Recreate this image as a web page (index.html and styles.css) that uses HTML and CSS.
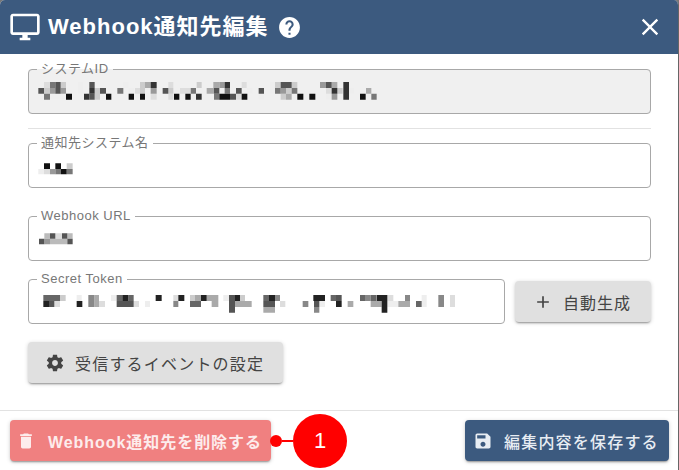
FILE: index.html
```html
<!DOCTYPE html>
<html lang="ja">
<head>
<meta charset="utf-8">
<title>Webhook通知先編集</title>
<link rel="stylesheet" href="styles.css">
</head>
<body>
<div class="dialog">
  <header class="header">
    <svg class="monitor" viewBox="0 0 24 24"><path d="M21 2H3c-1.100 0-2 .9-2 2v12c0 1.100.9 2 2 2h7v2H8v2h8v-2h-2v-2h7c1.100 0 2-.9 2-2V4c0-1.100-.9-2-2-2zm0 14H3V4h18v12z"/></svg>
    <h1 class="title">Webhook通知先編集</h1>
    <svg class="help" viewBox="0 0 24 24"><path d="M12 2C6.480 2 2 6.480 2 12s4.480 10 10 10 10-4.480 10-10S17.520 2 12 2zm1 17h-2v-2h2v2zm2.070-7.750-.9.920C13.450 12.900 13 13.500 13 15h-2v-.5c0-1.100.45-2.100 1.170-2.830l1.240-1.260c.37-.36.590-.86.590-1.410 0-1.100-.9-2-2-2s-2 .9-2 2H8c0-2.210 1.790-4 4-4s4 1.790 4 4c0 .88-.36 1.680-.93 2.250z"/></svg>
    <svg class="close" viewBox="0 0 24 24"><path d="M19 6.410 17.590 5 12 10.590 6.410 5 5 6.410 10.590 12 5 17.590 6.410 19 12 13.410 17.590 19 19 17.590 13.410 12z"/></svg>
  </header>
  <main class="content">
    <fieldset class="field field-id">
      <legend class="legend">システムID</legend>
      <svg class="mosaic" width="360" height="24" viewBox="0 0 1080 72">
        <path fill="#eee" d="M145 12h15v35h-15zM280 12h16v18h-16zM296 30h16v17h-16zM60 47h48v18H60zM720 12h15v18h-15zM720 30h15v17h-15zM652 30h16v17h-16zM686 47h16v18h-16zM888 47h17v18h-17zM957 30h15v17h-15z"/>
        <path fill="#ddd" d="M42 12h18v18H42zM415 12h15v18h-15zM315 30h15v17h-15zM450 30h30v17h-30zM362 47h18v18h-18zM415 47h15v18h-15zM635 12h15v18h-15zM618 47h17v18h-17zM888 30h17v17h-17z"/>
        <path fill="#ccc" d="M92 12h16v18H92zM330 12h15v18h-15zM500 12h15v18h-15zM42 30h18v17H42zM194 30h16v17h-16zM330 30h15v17h-15zM415 30h15v17h-15zM194 47h16v18h-16zM735 12h17v18h-17zM785 12h17v18h-17zM768 30h17v17h-17zM752 47h16v18h-16zM922 30h16v17h-16z"/>
        <path fill="#aaa" d="M345 12h17v18h-17zM530 30h10v17h-10zM550 12h18v18h-18zM540 30h12v17h-12zM768 47h17v18h-17zM905 12h17v18h-17zM1008 30h16v17h-16z"/>
        <path fill="#999" d="M92 30h16v17H92zM60 30h16v17H60zM568 12h16v18h-16zM362 30h18v17h-18zM870 12h18v18h-18zM752 30h16v17h-16zM905 47h17v18h-17z"/>
        <path fill="#777" d="M60 12h16v18H60zM262 30h18v17h-18zM482 30h16v17h-16zM42 47h18v18H42zM584 30h16v17h-16zM552 47h16v18h-16zM735 30h17v17h-17zM785 30h17v17h-17zM1024 47h16v18h-16z"/>
        <path fill="#555" d="M76 12h16v18H76zM178 12h16v18h-16zM25 30h17v17H25zM76 30h16v17H76zM210 30h18v17h-18zM398 30h17v17h-17zM178 47h16v18h-16zM552 30h16v17h-16zM618 30h17v17h-17zM600 47h18v18h-18zM686 30h16v17h-16zM752 12h16v18h-16zM768 12h17v18h-17zM888 12h17v18h-17z"/>
        <path fill="#333" d="M362 12h18v18h-18zM178 30h16v17h-16zM498 47h17v18h-17zM162 47h16v18h-16zM584 12h16v18h-16zM940 12h17v53h-17zM905 30h17v17h-17z"/>
        <path fill="#111" d="M108 47h18v18h-18zM228 47h16v18h-16zM296 47h16v18h-16zM330 47h15v18h-15zM432 47h16v18h-16zM466 47h16v18h-16zM568 47h32v18h-32zM635 47h17v18h-17zM802 47h18v18h-18zM838 47h18v18h-18zM990 47h17v18h-17z"/>
      </svg>
    </fieldset>
    <hr class="divider">
    <fieldset class="field field-name">
      <legend class="legend">通知先システム名</legend>
      <svg class="mosaic mosaic-name" width="50" height="20" viewBox="90 105 150 60">
        <path fill="#eee" d="M115 132h17v16h-17z"/>
        <path fill="#ddd" d="M132 132h18v16h-18z"/>
        <path fill="#ccc" d="M200 115h18v17h-18z"/>
        <path fill="#999" d="M150 132h16v16h-16z"/>
        <path fill="#777" d="M166 132h17v16h-17zM200 132h18v16h-18z"/>
        <path fill="#111" d="M132 115h18v17h-18zM166 115h17v17h-17zM183 132h17v16h-17z"/>
      </svg>
    </fieldset>
    <fieldset class="field field-url">
      <legend class="legend">Webhook URL</legend>
      <svg class="mosaic mosaic-url" width="50" height="20" viewBox="90 315 150 60">
        <path fill="#ddd" d="M166 325h20v16h-20z"/>
        <path fill="#bbb" d="M133 325h17v16h-17zM150 341h36v17h-36zM202 325h16v16h-16zM186 341h16v17h-16z"/>
        <path fill="#999" d="M133 341h17v17h-17z"/>
        <path fill="#555" d="M150 325h16v16h-16zM186 325h16v16h-16zM117 341h16v17h-16zM202 341h16v17h-16z"/>
      </svg>
    </fieldset>
    <div class="token-row">
      <fieldset class="field field-token">
        <legend class="legend">Secret Token</legend>
        <svg class="mosaic mosaic-token" width="440" height="24" viewBox="0 0 1320 72">
          <path fill="#eee" d="M125 15h15v18h-15zM228 15h17v18h-17zM330 33h15v18h-15zM565 15h17v18h-17zM853 33h17v18h-17zM1160 15h15v36h-15zM1057 33h33v18h-33z"/>
          <path fill="#ddd" d="M58 33h17v18H58zM192 33h18v18h-18zM296 33h16v18h-16zM415 15h15v18h-15zM735 33h16v18h-16zM1245 15h15v36h-15zM1057 15h18v18h-18z"/>
          <path fill="#ccc" d="M75 15h17v18H75zM465 15h15v18h-15zM615 15h15v18h-15z"/>
          <path fill="#aaa" d="M178 15h14v36h-14zM480 15h18v18h-18zM515 15h35v18h-35zM530 33h20v18h-20zM600 33h50v18h-50zM645 33h5v18h-5zM685 51h35v17h-35zM938 33h17v18h-17zM1007 33h33v18h-33zM1090 33h35v18h-35z"/>
          <path fill="#888" d="M160 15h18v36h-18zM415 33h15v18h-15zM720 15h15v18h-15zM803 33h17v18h-17zM990 15h17v18h-17zM1110 15h15v18h-15zM1210 15h17v36h-17zM837 51h16v17h-16z"/>
          <path fill="#666" d="M25 15h50v18H25zM245 15h17v18h-17zM280 15h16v18h-16zM465 33h33v18h-33zM685 15h17v18h-17zM887 15h16v18h-16zM975 15h15v18h-15zM1007 15h17v18h-17zM1143 33h17v18h-17z"/>
          <path fill="#555" d="M245 33h51v18h-51zM42 33h16v18H42zM582 15h18v36h-18zM582 51h18v17h-18zM685 33h35v18h-35zM837 33h16v18h-16zM903 15h17v18h-17z"/>
          <path fill="#222" d="M25 33h17v18H25zM262 15h18v18h-18zM362 15h18v18h-18zM430 15h18v18h-18zM125 33h17v18h-17zM498 15h17v18h-17zM600 15h15v18h-15zM702 15h18v18h-18zM835 15h35v18h-35zM903 33h17v18h-17zM1025 15h32v18h-32zM1040 33h17v35h-17z"/>
        </svg>
      </fieldset>
      <button class="btn btn-grey btn-auto" type="button">
        <svg class="ico" viewBox="0 0 24 24"><path d="M19 13h-6v6h-2v-6H5v-2h6V5h2v6h6v2z"/></svg>
        <span class="btn-text">自動生成</span>
      </button>
    </div>
    <button class="btn btn-grey btn-settings" type="button">
      <svg class="ico" viewBox="0 0 24 24"><path d="M19.430 12.980c.04-.32.07-.64.07-.98s-.03-.66-.07-.98l2.110-1.650c.19-.15.24-.42.12-.64l-2-3.460c-.12-.22-.39-.3-.61-.22l-2.490 1c-.52-.4-1.080-.73-1.690-.98l-.38-2.650C14.460 2.180 14.250 2 14 2h-4c-.25 0-.46.18-.49.42l-.38 2.650c-.61.25-1.170.59-1.690.98l-2.490-1c-.23-.09-.49 0-.61.22l-2 3.460c-.13.22-.07.49.12.64l2.110 1.650c-.04.32-.07.65-.07.98s.03.66.07.98l-2.110 1.650c-.19.15-.24.42-.12.64l2 3.460c.12.22.39.3.61.22l2.490-1c.52.4 1.080.73 1.690.98l.38 2.650c.03.24.24.42.49.42h4c.25 0 .46-.18.49-.42l.38-2.650c.61-.25 1.170-.59 1.690-.98l2.490 1c.23.09.49 0 .61-.22l2-3.460c.12-.22.07-.49-.12-.64l-2.110-1.650zM12 15.500c-1.930 0-3.500-1.570-3.500-3.500s1.570-3.500 3.500-3.500 3.500 1.570 3.500 3.500-1.570 3.500-3.500 3.500z"/></svg>
      <span class="btn-text">受信するイベントの設定</span>
    </button>
  </main>
  <footer class="footer">
    <div class="delete-wrap">
      <button class="btn btn-delete" type="button">
        <svg class="ico" viewBox="0 0 24 24"><path d="M6 19c0 1.100.9 2 2 2h8c1.100 0 2-.9 2-2V7H6v12zM19 4h-3.500l-1-1h-5l-1 1H5v2h14V4z"/></svg>
        <span class="btn-text">Webhook通知先を削除する</span>
      </button>
      <div class="callout">
        <span class="callout-dot"></span>
        <span class="callout-line"></span>
        <span class="callout-badge">1</span>
      </div>
    </div>
    <button class="btn btn-save" type="button">
      <svg class="ico" viewBox="0 0 24 24"><path d="M17 3H5c-1.110 0-2 .9-2 2v14c0 1.100.89 2 2 2h14c1.100 0 2-.9 2-2V7l-4-4zm-5 16c-1.660 0-3-1.340-3-3s1.340-3 3-3 3 1.340 3 3-1.340 3-3 3zm3-10H5V5h10v4z"/></svg>
      <span class="btn-text">編集内容を保存する</span>
    </button>
  </footer>
</div>
</body>
</html>
```
FILE: styles.css
```css
* { box-sizing: border-box; }
html, body { margin: 0; padding: 0; height: 100%; background: #777; }
body { width: 679px; height: 470px; overflow: hidden; font-family: "Liberation Sans", "Noto Sans CJK JP", sans-serif; }
.dialog { width: 679px; height: 470px; display: flex; flex-direction: column; background: #fff; border-right: 1px solid #666; border-radius: 5px 5px 0 0; overflow: hidden; }
.header { height: 54px; flex: none; background: #3c5a7f; color: #fff; display: flex; align-items: center; padding: 0 14px 0 9px; }
.header svg { fill: #fff; flex: none; }
.monitor { width: 32px; height: 32px; margin-right: 7px; }
.title { margin: 0; font-size: 22px; line-height: 54px; font-weight: 700; letter-spacing: 1px; }
.help { width: 25px; height: 25px; margin-left: 8px; }
.close { width: 28px; height: 28px; margin-left: auto; }
.content { flex: 1; padding: 9px 27px 0 28px; display: flex; flex-direction: column; }
.field { margin: 0; padding: 0 0 0 1px; border: 1px solid #a8a8a8; border-radius: 4px; min-width: 0; height: 51px; display: block; }
.legend { margin: 0 0 0 7px; padding: 0 4px; font-size: 13px; line-height: 12px; height: 12px; color: #777; letter-spacing: .5px; }
.mosaic { display: block; margin-top: 3px; }
.mosaic-name { margin-top: 11px; }
.mosaic-url { margin-top: 8px; }
.mosaic-token { margin: 5px 0 0 5px; }
.field-id { background: #f0f0f0; }
.divider { border: 0; border-top: 1px solid #e2e2e2; margin: 14px 0 0; width: 100%; height: 1px; }
.field-name { margin-top: 8px; }
.field-url { margin-top: 22px; }
.token-row { display: flex; align-items: flex-start; margin-top: 12px; }
.field-token { width: 477px; flex: none; }
.btn { border: 0; border-radius: 4px; height: 41px; display: inline-flex; align-items: center; font-family: inherit; font-size: 16px; padding: 0; box-shadow: 0 2px 2px -1px rgba(0,0,0,.35), 0 1px 4px rgba(0,0,0,.18); }
.btn-text { letter-spacing: 1px; white-space: nowrap; }
.ico { width: 20px; height: 20px; flex: none; fill: currentColor; }
.btn-grey { background: #e0e0e0; color: #444; }
.btn-auto { width: 137px; margin: 8px 0 0 10px; padding-left: 18px; }
.btn-auto .ico { margin-right: 10px; }
.btn-settings { width: 255px; margin-top: 18px; padding-left: 17px; align-self: flex-start; }
.btn-settings .ico { margin-right: 10px; }
.btn-settings .btn-text { letter-spacing: 1.2px; }
.footer { height: 60px; flex: none; border-top: 1px solid #e2e2e2; display: flex; justify-content: space-between; align-items: flex-start; padding: 9px 9px 0 10px; }
.delete-wrap { position: relative; }
.btn-delete { width: 261px; background: #f08080; color: #fdecec; padding-left: 6px; font-weight: 700; }
.btn-delete .btn-text { letter-spacing: .95px; }
.btn-delete .ico { margin-right: 12px; }
.btn-save { width: 204px; background: #3c5a7f; color: #e8edf3; padding-left: 8px; font-weight: 500; }
.btn-save .btn-text { letter-spacing: 1.2px; }
.btn-save .ico { margin-right: 11px; }
.callout { position: absolute; left: 260px; top: -6px; width: 77px; height: 54px; display: flex; align-items: center; }
.callout-dot { width: 12px; height: 12px; border-radius: 50%; background: #f00; flex: none; }
.callout-line { width: 11px; height: 2px; background: #f00; flex: none; }
.callout-badge { width: 54px; height: 54px; border-radius: 50%; background: #f00; color: #fff; font-size: 22px; display: flex; align-items: center; justify-content: center; flex: none; }
```
